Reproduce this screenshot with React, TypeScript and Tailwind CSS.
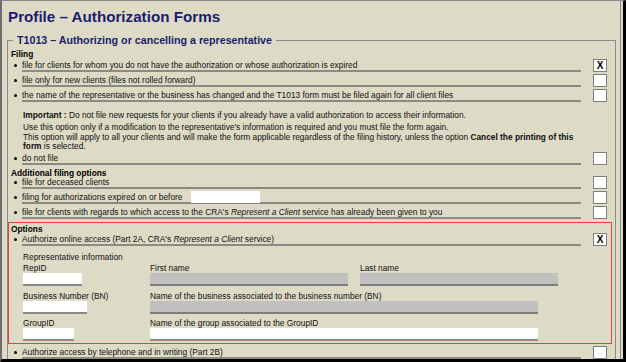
import type { ReactNode } from "react";

const Check = ({ checked = false }: { checked?: boolean }) => (
    <div className="flex h-[13px] w-[14px] shrink-0 items-center justify-center border border-[#7f7f7f] bg-white text-[10px] leading-none font-bold text-black">
        {checked ? "X" : null}
    </div>
);

interface RowProps {
    children: ReactNode;
    checked?: boolean;
    className?: string;
}

// One bulleted option: bullet, underlined text line, checkbox on the right.
const Row = ({ children, checked, className = "" }: RowProps) => (
    <div className={`flex h-[15px] items-end ${className}`}>
        <div className="flex h-[15px] w-[8px] items-center pt-[2px]">
            <span className="h-[3px] w-[3px] rounded-full bg-black" />
        </div>
        <div className="flex h-[15px] w-[559px] items-center border-b-2 border-[#8b8b83] pt-[3px] leading-[10px] whitespace-nowrap">
            {children}
        </div>
        <div className="ml-[12px]">
            <Check checked={checked} />
        </div>
    </div>
);

const Field = ({ w, gray = false }: { w: string; gray?: boolean }) => (
    <div
        className={`h-[13px] border-b-2 ${w} ${
            gray ? "border-[#7d7d7d] bg-[#c0c0c0]" : "border-[#8a8a8a] bg-white"
        }`}
    />
);

export default function App() {
    return (
        <div className="h-[362px] w-[626px] overflow-hidden border-t border-r-[3px] border-b-[3px] border-l-2 border-t-[#8a8a8a] border-r-black border-b-black border-l-[#6e6e6e] bg-[#dddbc6] font-['Liberation_Sans',Arial,sans-serif] text-[8.35px] text-[#111]">
            <div className="h-full w-[619px] border-r border-[#8c8c8c] pt-[7px] pl-[5px]">
                <h1 className="ml-[1px] h-[18px] text-[15.2px] leading-[18px] font-bold text-[#1b1b6f]">
                    Profile – Authorization Forms
                </h1>

                <fieldset className="mt-[7px] h-[400px] w-[609px] border border-[#8a8a8a]">
                    <legend className="ml-[5px] px-[4px] text-[10.7px] leading-[14px] font-bold text-[#1b1b6f]">
                        T1013 – Authorizing or cancelling a representative
                    </legend>

                    <div className="h-[10px] pt-[1px] pl-[3px] leading-[13px] font-bold text-black">
                        Filing
                    </div>
                    <Row className="ml-[6px]" checked>
                        file for clients for whom you do not have the authorization or whose
                        authorization is expired
                    </Row>
                    <Row className="ml-[6px]">
                        file only for new clients (files not rolled forward)
                    </Row>
                    <Row className="ml-[6px]">
                        the name of the representative or the business has changed and the T1013
                        form must be filed again for all client files
                    </Row>

                    <div className="h-[48px] pt-[8px] pl-[15px] whitespace-nowrap">
                        <p className="mb-[3px] leading-[10px]">
                            <b>Important :</b> Do not file new requests for your clients if you
                            already have a valid authorization to access their information.
                        </p>
                        <p className="leading-[9.5px]">
                            Use this option only if a modification to the representative's
                            information is required and you must file the form again.
                            <br />
                            This option will apply to all your clients and will make the form
                            applicable regardless of the filing history, unless the option{" "}
                            <b>Cancel the printing of this</b>
                            <br />
                            <b>form</b> is selected.
                        </p>
                    </div>

                    <Row className="ml-[6px]">do not file</Row>

                    <div className="h-[9px] pt-[2px] pl-[3px] leading-[13px] font-bold text-black">
                        Additional filing options
                    </div>
                    <Row className="ml-[6px]">file for deceased clients</Row>
                    <Row className="ml-[6px]">
                        filing for authorizations expired on or before
                        <span className="ml-[9px] h-[12px] w-[69px] bg-white" />
                    </Row>
                    <Row className="ml-[6px]">
                        file for clients with regards to which access to the CRA's&nbsp;
                        <i>Represent a Client</i>&nbsp;service has already been given to you
                    </Row>

                    <div className="mt-[3px] w-[604px] border border-[#e5413b] pb-[2px]">
                        <div className="h-[8px] pl-[2px] leading-[13px] font-bold text-black">
                            Options
                        </div>
                        <Row className="ml-[5px]" checked>
                            Authorize online access (Part 2A, CRA's&nbsp;
                            <i>Represent a Client</i>&nbsp;service)
                        </Row>

                        <div className="h-[15px] pt-[5px] pl-[14px] leading-[12px]">
                            Representative information
                        </div>

                        <div className="flex h-[12px] pt-[2px] pl-[14px] leading-[11px]">
                            <span className="w-[127px]">RepID</span>
                            <span className="w-[210px]">First name</span>
                            <span>Last name</span>
                        </div>
                        <div className="flex pl-[14px]">
                            <Field w="w-[59px]" />
                            <div className="ml-[68px]">
                                <Field w="w-[198px]" gray />
                            </div>
                            <div className="ml-[12px]">
                                <Field w="w-[198px]" gray />
                            </div>
                        </div>

                        <div className="flex h-[15px] pt-[5px] pl-[14px] leading-[11px]">
                            <span className="w-[127px]">Business Number (BN)</span>
                            <span>Name of the business associated to the business number (BN)</span>
                        </div>
                        <div className="flex pl-[14px]">
                            <Field w="w-[64px]" />
                            <div className="ml-[63px]">
                                <Field w="w-[388px]" gray />
                            </div>
                        </div>

                        <div className="flex h-[14px] pt-[4px] pl-[14px] leading-[11px]">
                            <span className="w-[127px]">GroupID</span>
                            <span>Name of the group associated to the GroupID</span>
                        </div>
                        <div className="flex pl-[14px]">
                            <Field w="w-[51px]" />
                            <div className="ml-[76px]">
                                <Field w="w-[388px]" />
                            </div>
                        </div>
                    </div>

                    <Row className="ml-[6px]">
                        Authorize access by telephone and in writing (Part 2B)
                    </Row>
                </fieldset>
            </div>
        </div>
    );
}
